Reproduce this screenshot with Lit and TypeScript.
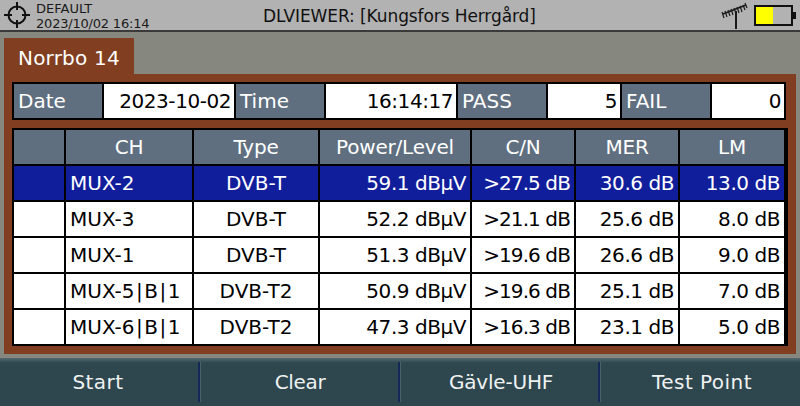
import { LitElement, html, css } from "lit";
import { customElement } from "lit/decorators.js";

const rows = [
  ["MUX-2", "DVB-T", "59.1 dBµV", ">27.5 dB", "30.6 dB", "13.0 dB"],
  ["MUX-3", "DVB-T", "52.2 dBµV", ">21.1 dB", "25.6 dB", "8.0 dB"],
  ["MUX-1", "DVB-T", "51.3 dBµV", ">19.6 dB", "26.6 dB", "9.0 dB"],
  ["MUX-5|B|1", "DVB-T2", "50.9 dBµV", ">19.6 dB", "25.1 dB", "7.0 dB"],
  ["MUX-6|B|1", "DVB-T2", "47.3 dBµV", ">16.3 dB", "23.1 dB", "5.0 dB"],
];
const heads = ["", "CH", "Type", "Power/Level", "C/N", "MER", "LM"];
const info: [string, string][] = [["Date", "2023-10-02"], ["Time", "16:14:17"], ["PASS", "5"], ["FAIL", "0"]];
const softkeys = ["Start", "Clear", "Gävle-UHF", "Test Point"];

const channel = (name: string) => {
  const parts = name.split("|");
  return parts.map((p, i) => html`${i > 0 ? html`<span class="pipe">|</span>` : ""}${p}`);
};

const cellClass = (j: number) => (j === 0 ? "name" : j === 1 ? "mid" : j === 3 ? "r cn" : "r");

@customElement("app-root")
export class AppRoot extends LitElement {
  static styles = css`
    :host {
      display: block;
      width: 800px;
      height: 406px;
      overflow: hidden;
      font-family: "DejaVu Sans", sans-serif;
      background: #868880;
    }
    .top {
      height: 30px;
      display: flex;
      align-items: center;
      background: #b2b2b2;
      border-bottom: 2px solid #3a3a3a;
    }
    .target { width: 28px; height: 28px; margin-left: 3px; flex: none; }
    .meta {
      margin-left: 5px;
      padding-top: 2px;
      font-size: 13px;
      line-height: 15px;
      color: #1a1a1a;
      width: 210px;
      flex: none;
    }
    .stamp { letter-spacing: -0.2px; }
    .title {
      flex: 1;
      font-size: 17px;
      letter-spacing: -0.1px;
      color: #111;
      padding-left: 17px;
      padding-top: 2px;
    }
    .ant { width: 27px; height: 27px; flex: none; margin-right: 6px; }
    .batt { display: flex; align-items: center; margin-right: 4px; flex: none; }
    .batt-body {
      width: 35px;
      height: 17px;
      border: 2px solid #111;
      background: linear-gradient(90deg, #ffff00 49%, #b2b2b2 49%);
    }
    .batt-tip { width: 3px; height: 7px; background: #111; }
    .main { padding: 6px 4px 0; height: 326px; box-sizing: border-box; }
    .tab {
      width: 130px;
      height: 36px;
      box-sizing: border-box;
      background: #823e20;
      color: #fff;
      font-size: 20px;
      letter-spacing: 0.2px;
      padding: 4px 0 0 14px;
      line-height: 32px;
    }
    .panel {
      background: #823e20;
      height: 280px;
      box-sizing: border-box;
      padding: 8px 8px 0;
    }
    .info {
      width: 774px;
      height: 38px;
      box-sizing: border-box;
      display: grid;
      grid-template-columns: 88px 130px 88px 130px 88px 72px 88px 72px;
      gap: 2px;
      background: #000;
      border: 2px solid #000;
      font-size: 20px;
      line-height: 34px;
    }
    .lab { background: #5f6f80; color: #fff; padding-left: 4px; }
    .val {
      background: #fff;
      color: #000;
      text-align: right;
      padding-right: 3px;
      letter-spacing: -0.45px;
    }
    .grid {
      margin-top: 8px;
      width: 776px;
      height: 218px;
      box-sizing: border-box;
      display: grid;
      grid-template-columns: 50px 126px 124px 150px 102px 102px 104px;
      grid-template-rows: repeat(6, 34px);
      gap: 2px;
      background: #000;
      border-style: solid;
      border-color: #000;
      border-width: 2px 4px 2px 2px;
      font-size: 20px;
    }
    .c {
      background: #fff;
      color: #000;
      display: flex;
      align-items: center;
      padding: 0 4px;
      white-space: nowrap;
      letter-spacing: -0.45px;
    }
    .h { background: #5f6f80; color: #fff; justify-content: center; letter-spacing: -0.2px; }
    .mid { justify-content: center; letter-spacing: 0; }
    .name { letter-spacing: 0; }
    .r { justify-content: flex-end; }
    .cn { letter-spacing: -0.9px; }
    .sel { background: #101e9c; color: #fff; }
    .pipe { margin: 0 1.500px; }
    .keys {
      height: 48px;
      display: grid;
      grid-template-columns: repeat(4, 200px);
      background: linear-gradient(#54696f 0, #2e464e 5px, #2e464e 100%);
      font-size: 20px;
      letter-spacing: 0.45px;
      color: #eef2f2;
    }
    .key {
      display: flex;
      align-items: center;
      justify-content: center;
      position: relative;
    }
    .key:nth-child(1) { padding-right: 4px; }
    .key:nth-child(2) { letter-spacing: -0.35px; }
    .key:nth-child(3) { padding-left: 2px; letter-spacing: -0.2px; }
    .key:nth-child(4) { padding-left: 4px; }
    .key:not(:last-child)::after {
      content: "";
      position: absolute;
      right: -1px;
      top: 4px;
      bottom: 4px;
      width: 2px;
      background: #14285a;
      border-right: 1px solid #4a6066;
    }
  `;

  render() {
    return html`
      <div class="top">
        <svg class="target" viewBox="0 0 28 28" fill="none" stroke="#111" stroke-width="2">
          <circle cx="14" cy="14" r="8.500"></circle>
          <path d="M14 1v8M14 19v8M1 14h8M19 14h8"></path>
        </svg>
        <div class="meta"><div>DEFAULT</div><div class="stamp">2023/10/02 16:14</div></div>
        <div class="title">DLVIEWER: [Kungsfors Herrgård]</div>
        <svg class="ant" viewBox="0 0 27 27" stroke="#1a1a1a" fill="none">
          <path stroke-width="2" d="M15 9v18"></path>
          <path stroke-width="1.600" d="M2 12l23-9"></path>
          <path stroke-width="1.200" d="M1 10l2 6M4 9l2 6M7 8l2 6M10 7l2 6M13 6l2 6M16 5l2 6M19 4l2 6M22 3l2 5M24 1l2 5"></path>
        </svg>
        <div class="batt"><div class="batt-body"></div><div class="batt-tip"></div></div>
      </div>
      <div class="main">
        <div class="tab">Norrbo 14</div>
        <div class="panel">
          <div class="info">
            ${info.map(([l, v]) => html`<div class="lab">${l}</div><div class="val">${v}</div>`)}
          </div>
          <div class="grid">
            ${heads.map((h) => html`<div class="c h">${h}</div>`)}
            ${rows.map(
              (r, i) => html`
                <div class="c ${i === 0 ? "sel" : ""}"></div>
                ${r.map(
                  (v, j) =>
                    html`<div class="c ${cellClass(j)} ${i === 0 ? "sel" : ""}">${j === 0 ? channel(v) : v}</div>`
                )}
              `
            )}
          </div>
        </div>
      </div>
      <div class="keys">
        ${softkeys.map((k) => html`<div class="key">${k}</div>`)}
      </div>
    `;
  }
}
